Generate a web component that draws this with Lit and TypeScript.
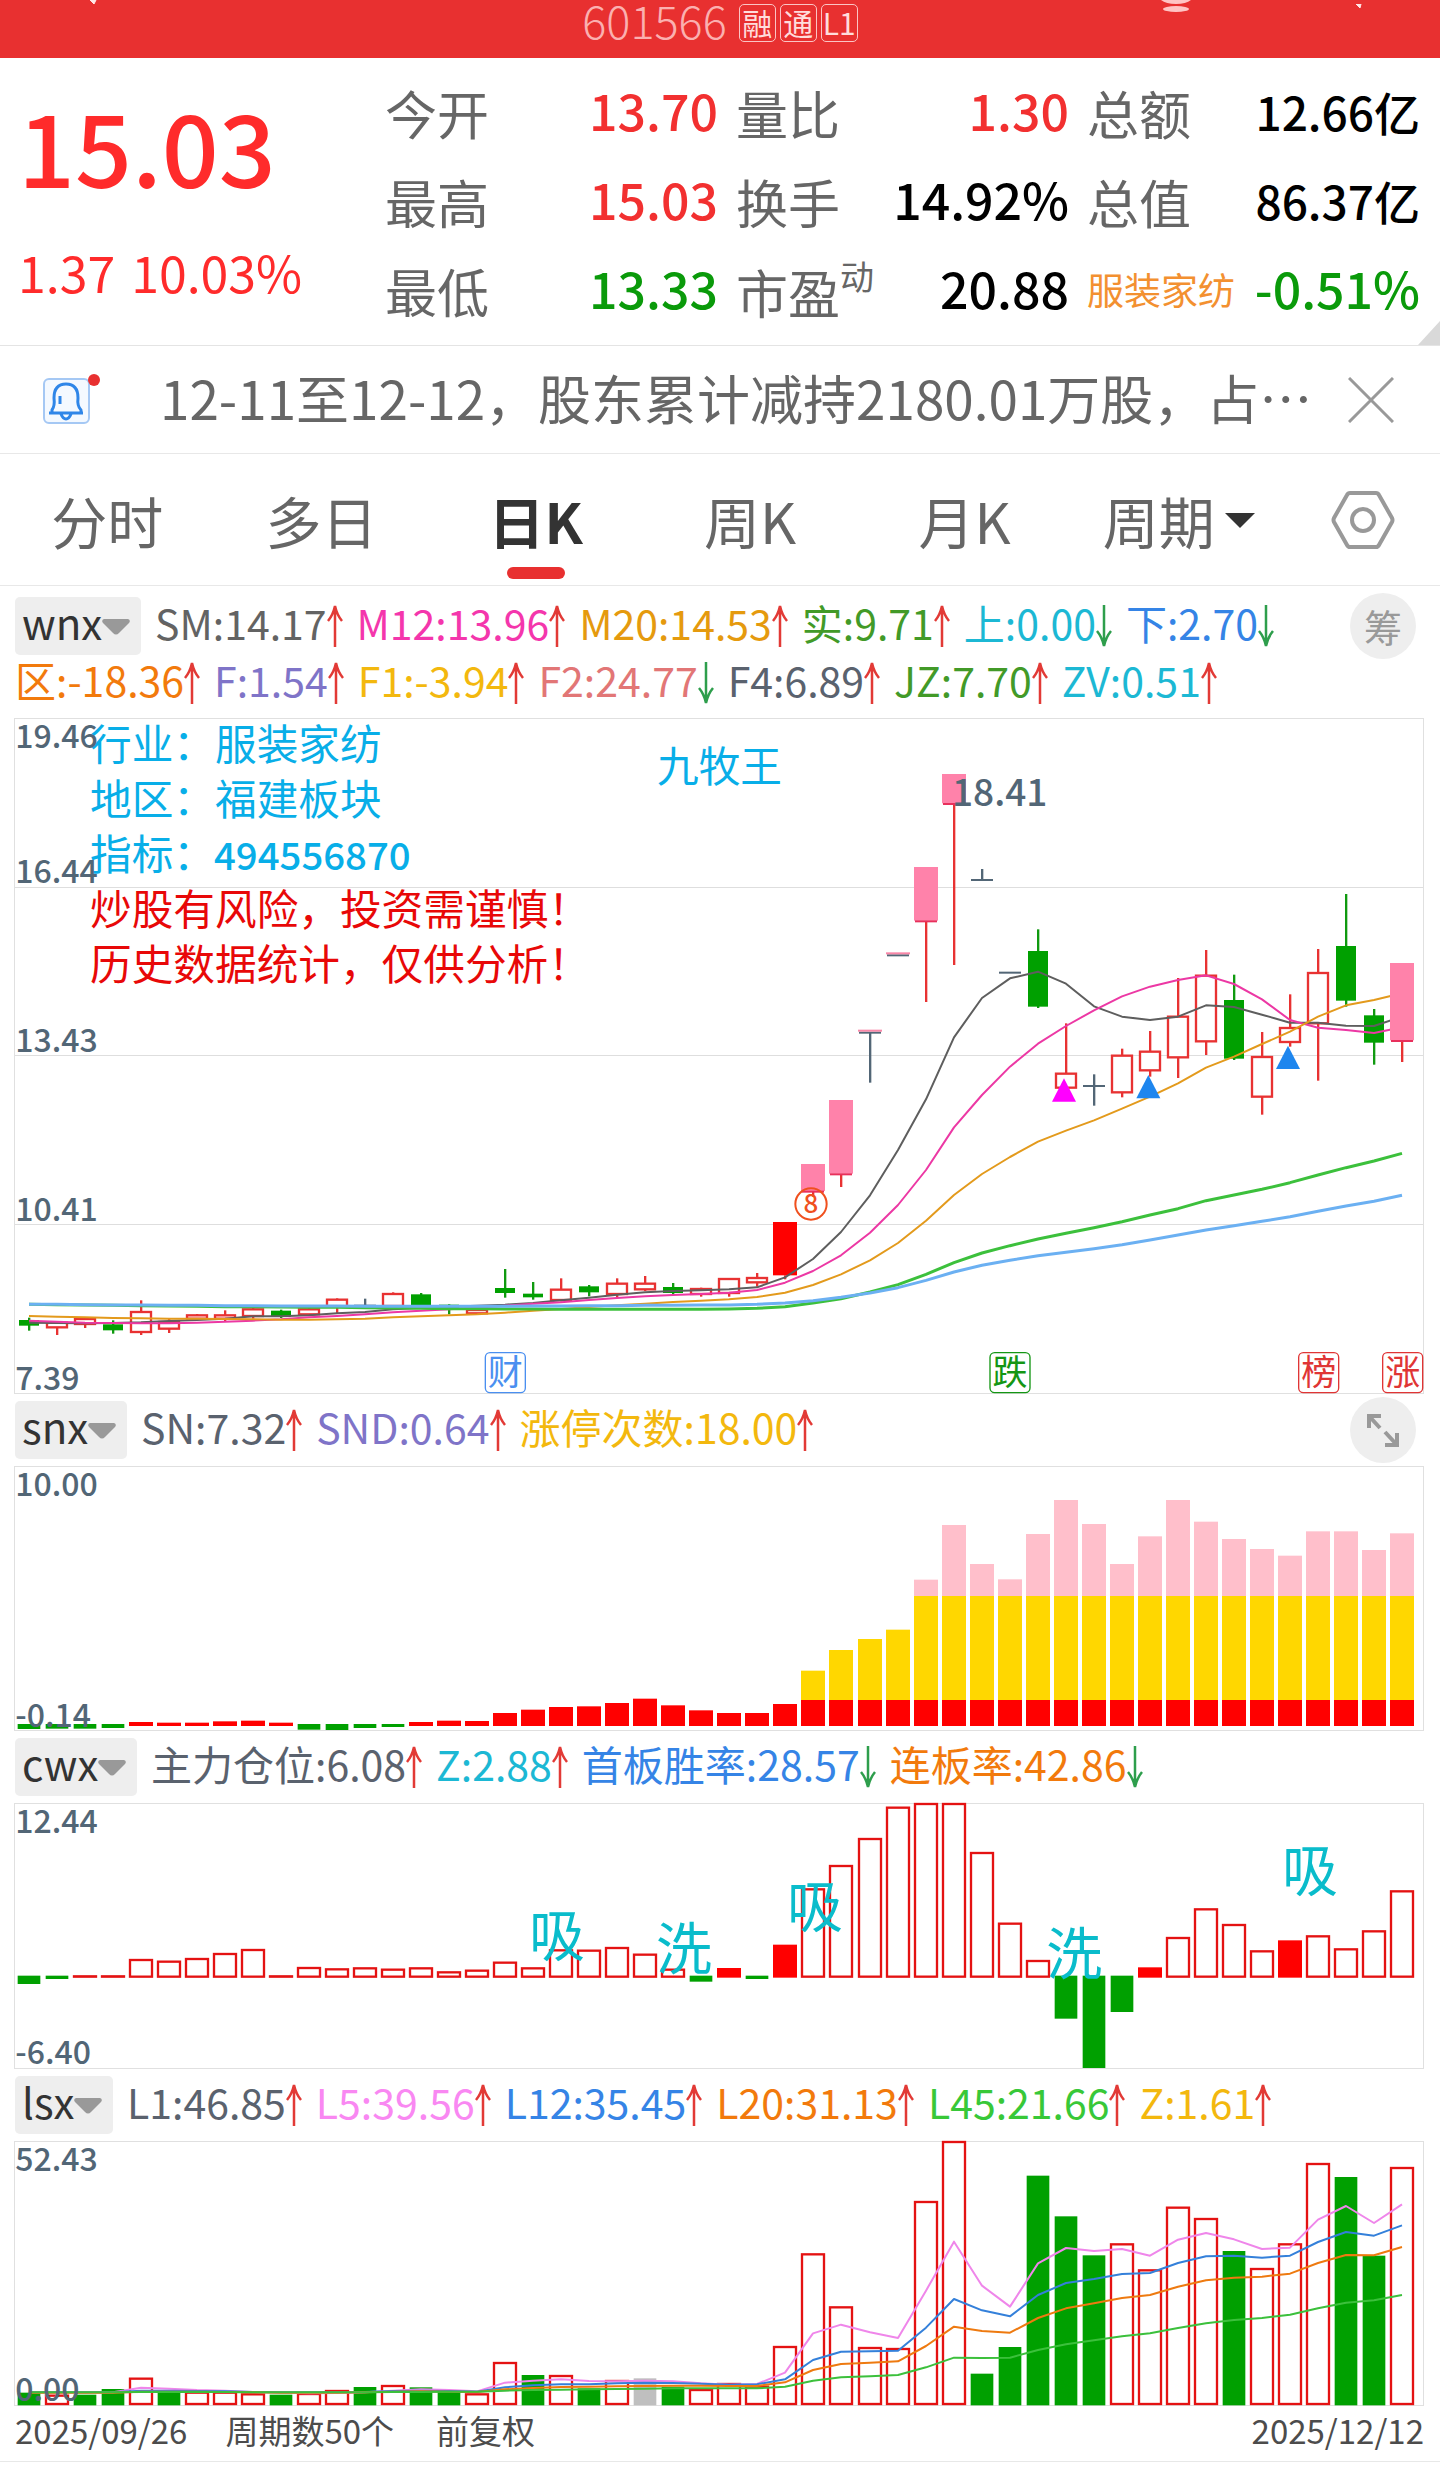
import { LitElement, html, svg, css, nothing } from "lit";
import { customElement, property } from "lit/decorators.js";

/* ---------- chart geometry: three drawing units per pixel ---------- */
const U = 3;
const PLOT_WIDTH = 1410;
const centre = (i: number) => U * Math.round(14.6 + 28.03 * i);
const shift = (base: number, values: number[]) => values.map((v) => v + base);

type Reading = { text: string; color: string; up: boolean };
const RED = "#e83232";
const GREEN = "#00a000";
const SLATE = "#526676";

const rows: Record<string, Reading[]> = {
  wnx1: [
    { text: "SM:14.17", color: "#636363", up: true },
    { text: "M12:13.96", color: "#f436ac", up: true },
    { text: "M20:14.53", color: "#e59a0e", up: true },
    { text: "实:9.71", color: "#429a28", up: true },
    { text: "上:0.00", color: "#1cb8d4", up: false },
    { text: "下:2.70", color: "#3584e6", up: false },
  ],
  wnx2: [
    { text: "区:-18.36", color: "#f27a0c", up: true },
    { text: "F:1.54", color: "#7f74c8", up: true },
    { text: "F1:-3.94", color: "#f3b80e", up: true },
    { text: "F2:24.77", color: "#e27676", up: false },
    { text: "F4:6.89", color: "#5a626e", up: true },
    { text: "JZ:7.70", color: "#429a28", up: true },
    { text: "ZV:0.51", color: "#1cb8d4", up: true },
  ],
  snx: [
    { text: "SN:7.32", color: "#5a626e", up: true },
    { text: "SND:0.64", color: "#7f74c8", up: true },
    { text: "涨停次数:18.00", color: "#f3b80e", up: true },
  ],
  cwx: [
    { text: "主力仓位:6.08", color: "#5a626e", up: true },
    { text: "Z:2.88", color: "#1cb8d4", up: true },
    { text: "首板胜率:28.57", color: "#3584e6", up: false },
    { text: "连板率:42.86", color: "#f27a0c", up: false },
  ],
  lsx: [
    { text: "L1:46.85", color: "#5a626e", up: true },
    { text: "L5:39.56", color: "#f988f2", up: true },
    { text: "L12:35.45", color: "#3584e6", up: true },
    { text: "L20:31.13", color: "#f27a0c", up: true },
    { text: "L45:21.66", color: "#38c838", up: true },
    { text: "Z:1.61", color: "#f3b80e", up: true },
  ],
};

/* kind, high, body top, body bottom, low */
type Candle = [string, number, number, number, number];
const early: Candle[] = [
  ["g", 833, 840, 857, 872], ["r", 845, 848, 862, 885], ["r", 833, 837, 852, 864],
  ["g", 841, 853, 871, 881], ["r", 781, 816, 876, 885], ["r", 836, 846, 866, 879],
  ["r", 822, 826, 836, 840], ["r", 811, 826, 836, 846], ["r", 803, 808, 828, 836],
  ["g", 809, 812, 831, 834], ["r", 803, 808, 823, 826], ["r", 775, 779, 800, 820],
  ["d", 776, 797, 797, 802], ["r", 757, 762, 798, 798], ["g", 759, 763, 798, 798],
  ["g", 793, 794, 810, 823], ["r", 795, 810, 820, 823], ["g", 687, 744, 759, 773],
  ["g", 726, 761, 772, 779], ["r", 715, 749, 780, 784], ["g", 735, 739, 757, 769],
  ["r", 715, 731, 762, 773], ["r", 708, 731, 748, 753], ["g", 729, 741, 759, 764],
  ["r", 743, 747, 762, 770], ["r", 717, 717, 759, 770], ["r", 699, 714, 727, 740],
];
const late: Candle[] = [
  ["f", 1506, 1506, 1666, 1678], ["p", 1332, 1332, 1415, 1430], ["p", 1140, 1140, 1363, 1401],
  ["t", 929, 938, 938, 1088], ["t", 697, 706, 706, 706], ["p", 441, 441, 604, 846],
  ["p", 162, 162, 252, 735], ["d", 447, 480, 480, 480], ["d", 758, 758, 758, 758],
  ["g", 628, 693, 860, 864], ["r", 910, 1061, 1103, 1103], ["d", 1063, 1098, 1098, 1157],
  ["r", 986, 1007, 1117, 1132], ["r", 933, 995, 1051, 1070], ["r", 774, 890, 1012, 1074],
  ["r", 690, 767, 964, 1005], ["g", 764, 840, 1016, 1020], ["r", 936, 1011, 1130, 1184],
  ["r", 823, 924, 966, 980], ["r", 687, 759, 910, 1082], ["g", 522, 678, 842, 860],
  ["g", 867, 886, 968, 1034], ["p", 729, 729, 963, 1026],
];
const candles: Candle[] = [
  ...early.map(([k, ...v]) => [k, ...shift(960, v)] as Candle),
  ...late,
];

const averages: { color: string; width: number; y: number[] }[] = [
  {
    color: "#5e5e5e", width: 6,
    y: [
      ...shift(960, [848, 849, 850, 849, 847, 843, 840, 836, 829, 829, 826, 820, 816, 808, 804, 800, 797, 794, 789, 781, 773, 764, 757, 753, 751]),
      ...shift(1080, [628, 622, 592, 537, 456, 346, 210, 58]),
      952, 834, 775, 755, 791, 859, 890, 900, 890, 856, 861, 884, 908, 908, 917, 918, 890,
    ],
  },
  {
    color: "#ec38a4", width: 6,
    y: [
      ...shift(960, [842, 845, 848, 849, 850, 850, 848, 845, 842, 838, 832, 828, 823, 817, 812, 808, 803, 797, 791, 787, 780, 774, 769, 765, 762]),
      ...shift(1080, [638, 630, 608, 573, 526, 458, 375, 270, 142, 45]),
      1040, 971, 918, 871, 829, 800, 780, 766, 792, 838, 900, 923, 930, 939, 922,
    ],
  },
  {
    color: "#e39a1c", width: 6,
    y: [
      ...shift(960, [828, 830, 832, 834, 835, 836, 836, 837, 838, 839, 839, 838, 836, 832, 829, 826, 823, 818, 812, 807, 801, 796, 791, 786, 782]),
      ...shift(1080, [658, 651, 638, 615, 583, 541, 489, 422, 345, 282, 231, 185, 152, 121, 86]),
      1130, 1090, 1043, 1010, 972, 935, 890, 856, 840, 820,
    ],
  },
  {
    color: "#3cc03c", width: 9,
    y: [
      ...shift(960, [793, 794, 795, 796, 797, 798, 799, 800, 800, 801, 802, 802, 803, 804, 805, 806, 806, 807, 807, 808, 808, 808, 808, 808, 808]),
      ...shift(1080, [687, 685, 680, 669, 656, 636, 614, 583, 548, 519, 497, 477, 460, 443, 425, 405, 386, 362, 345, 328, 308, 285, 263, 243, 220]),
    ],
  },
  {
    color: "#6bb0f2", width: 9,
    y: [
      ...shift(960, [793, 793, 794, 795, 795, 796, 796, 797, 797, 798, 798, 798, 799, 799, 799, 799, 799, 799, 798, 798, 797, 797, 796, 796, 795]),
      ...shift(1080, [675, 673, 669, 662, 652, 639, 623, 601, 576, 556, 541, 527, 517, 506, 494, 480, 465, 450, 437, 424, 410, 394, 378, 364, 346]),
    ],
  },
];

const polyline = (y: number[], color: string, width: number) => svg`
  <polyline points=${y.map((v, i) => `${centre(i)},${v}`).join(" ")}
    fill="none" stroke=${color} stroke-width=${width} stroke-linejoin="round" />`;

const box = (i: number, top: number, bottom: number, fill: string, half = 36) => svg`
  <rect x=${centre(i) - half} y=${top} width=${half * 2} height=${Math.max(bottom - top, 3)} fill=${fill} />`;

const hollow = (i: number, top: number, bottom: number, color: string, half: number) => svg`
  <rect x=${centre(i) - half + 3} y=${top} width=${half * 2 - 6} height=${Math.max(bottom - top, 1)}
    fill="#fff" stroke=${color} stroke-width="7" />`;

const wick = (i: number, top: number, bottom: number, color: string) =>
  bottom > top
    ? svg`<rect x=${centre(i) - 3} y=${top} width="7" height=${bottom - top} fill=${color} />`
    : nothing;

const axis = (text: string, y: number) => svg`
  <text x="4" y=${y} font-size="96" font-weight="500" fill=${SLATE}>${text}</text>`;

const frame = (top: number, height: number) => svg`
  <rect x="1.5" y=${top + 1.5} width=${PLOT_WIDTH * U - 3} height=${height * U - 3}
    fill="none" stroke="#e0e0e0" stroke-width="3" />`;

const drawCandle = ([kind, high, top, bottom, low]: Candle, i: number) => {
  switch (kind) {
    case "g":
      return svg`${wick(i, high, low, "#109a10")}${box(i, top, bottom, GREEN, 30)}`;
    case "r":
      return svg`${wick(i, high, top, RED)}${wick(i, bottom, low, RED)}${hollow(i, top, bottom, RED, 33)}`;
    case "f":
      return svg`${wick(i, bottom, low, RED)}${box(i, top, bottom, "#f00")}`;
    case "d":
      return svg`${wick(i, high, low, SLATE)}${box(i, top - 3, top + 3, SLATE, 33)}`;
    case "t":
      return svg`${wick(i, top, low, SLATE)}${box(i, top - 3, top + 3, SLATE, 33)}`;
    default:
      return svg`${wick(i, bottom, low, RED)}`;
  }
};

const drawLimitUp = ([kind, high, top, bottom]: Candle, i: number) => {
  if (kind === "p") {
    return svg`${box(i, top, bottom - 2, "#ff82aa")}${box(i, bottom - 3, bottom + 3, "#e8305c", 33)}`;
  }
  return kind === "t" ? box(i, high, top - 3, "#f987a8", 36) : nothing;
};

const marker = (x: number, top: number, color: string) => svg`
  <polygon points=${`${x},${top} ${x + 36},${top + 70} ${x - 36},${top + 70}`} fill=${color} />`;

const tag = (x: number, label: string, color: string) => svg`
  <rect x=${x} y="1898" width="120" height="120" rx="14" fill="#fff" stroke=${color} stroke-width="4" />
  <text x=${x + 60} y="1996" font-size="105" text-anchor="middle" fill=${color}>${label}</text>`;

const notes = [
  ["行业：服装家纺", "#08aee8"],
  ["地区：福建板块", "#08aee8"],
  ["指标：", "#08aee8"],
  ["炒股有风险，投资需谨慎！", "#e80808"],
  ["历史数据统计，仅供分析！", "#e80808"],
];

const priceChart = () => svg`
  ${frame(-6, 676)}
  ${[501, 1005, 1512].map((y) => svg`<rect x="3" y=${y} width="4224" height="3" fill="#dedede" />`)}
  ${notes.map(([text, color], n) => svg`
    <text x="228" y=${120 + n * 165} font-size="125" fill=${color}>${text}</text>`)}
  <text x="600" y="450" font-size="115" font-weight="500" fill="#08aee8">494556870</text>
  <text x="1929" y="186" font-size="125" fill="#08aee8">九牧王</text>
  ${candles.map(drawCandle)}
  ${averages.map((a) => polyline(a.y, a.color, a.width))}
  ${candles.map(drawLimitUp)}
  ${marker(3150, 1075, "#ff00ff")}
  ${marker(3403, 1065, "#1e86ee")}
  ${marker(3822, 977, "#1e86ee")}
  <text x="2814" y="258" font-size="111" font-weight="500" fill=${SLATE}>18.41</text>
  <circle cx="2391" cy="1452" r="47" fill="none" stroke="#f0501e" stroke-width="6" />
  <text x="2391" y="1480" font-size="78" font-weight="500" text-anchor="middle" fill="#f0501e">8</text>
  ${tag(1414, "财", "#4a8ff0")}
  ${tag(2928, "跌", "#149614")}
  ${tag(3854, "榜", "#e03535")}
  ${tag(4106, "涨", "#e03535")}
  ${axis("19.46", 84)}${axis("16.44", 489)}${axis("13.43", 996)}${axis("10.41", 1503)}${axis("7.39", 2010)}`;

const strength = [
  1017, 1016, 1016, 1014, 996, 998, 998, 994, 992, 998, 1019, 1020, 1014, 1011, 996, 992, 993,
  969, 959, 951, 949, 939, 926, 946, 961, 969, 969, 942, 842, 780, 747, 719, 569, 405, 522, 568,
  432, 330, 402, 522, 439, 330, 395, 447, 477, 497, 424, 424, 480, 430,
];

const strengthChart = () => svg`
  ${frame(228, 265)}
  ${strength.map((v, i) => {
    if (v > 1008) return box(i, 1002, v, GREEN, 34);
    return svg`
      ${v < 618 ? box(i, v, 618, "#ffbfcb") : nothing}
      ${v < 930 && i > 27 ? box(i, Math.max(v, 618), 930, "#ffd700") : nothing}
      ${box(i, i > 27 ? 930 : v, 1008, "#f00")}`;
  })}
  ${axis("10.00", 318)}${axis("-0.14", 1010)}`;

/* kind (g: below zero, f: solid, r: hollow) and bar end */
const holding: [string, number][] = [
  ["g", 762], ["g", 747], ["r", 739], ["r", 739], ["r", 690], ["r", 695], ["r", 687], ["r", 672],
  ["r", 660], ["r", 739], ["r", 714], ["r", 718], ["r", 715], ["r", 719], ["r", 715], ["r", 727],
  ["r", 722], ["r", 698], ["r", 715], ["r", 661], ["r", 662], ["r", 654], ["r", 674], ["r", 719],
  ["g", 755], ["f", 714], ["g", 747], ["f", 644], ["r", 478], ["r", 408], ["r", 327], ["r", 233],
  ["r", 222], ["r", 222], ["r", 369], ["r", 581], ["r", 693], ["g", 866], ["g", 1014], ["g", 846],
  ["f", 712], ["r", 624], ["r", 538], ["r", 585], ["r", 664], ["f", 631], ["r", 619], ["r", 658],
  ["r", 604], ["r", 484],
];

const signals: [string, number, number][] = [
  ["吸", 1629, 677], ["洗", 2010, 718], ["吸", 2403, 590], ["洗", 3181, 731], ["吸", 3888, 482],
];

const holdingChart = () => svg`
  ${frame(219, 266)}
  ${holding.map(([kind, v], i) =>
    kind === "g" ? box(i, 737, v, GREEN, 34)
      : kind === "f" ? box(i, v, 743, "#f00")
        : hollow(i, v, 740, "#e41212", 36))}
  ${signals.map(([text, x, y]) => svg`
    <text x=${x} y=${y} font-size="168" text-anchor="middle" fill="#0abccb">${text}</text>`)}
  ${axis("12.44", 308)}${axis("-6.40", 1003)}`;

const volume: [string, number][] = [
  ["g", 938], ["r", 947], ["g", 944], ["g", 927], ["r", 896], ["g", 935], ["r", 938], ["r", 938],
  ["r", 943], ["g", 944], ["r", 942], ["r", 933], ["g", 921], ["r", 918], ["g", 922], ["g", 936],
  ["r", 943], ["r", 849], ["g", 885], ["r", 888], ["g", 925], ["r", 903], ["n", 895], ["g", 920],
  ["r", 930], ["r", 912], ["r", 920], ["r", 801], ["r", 523], ["r", 682], ["r", 804], ["r", 807],
  ["r", 366], ["r", 184], ["g", 881], ["g", 801], ["g", 287], ["g", 409], ["g", 526], ["r", 493],
  ["r", 571], ["r", 383], ["r", 417], ["g", 513], ["r", 567], ["r", 493], ["r", 252], ["g", 291],
  ["g", 527], ["r", 264],
];

const volumeLines: [string, number[]][] = [
  ["#ef86ea", [937, 937, 938, 937, 923, 926, 930, 932, 936, 938, 940, 939, 937, 932, 928, 930, 934, 908, 902, 898, 903, 904, 902, 904, 910, 914, 912, 878, 760, 734, 757, 774, 632, 485, 617, 680, 550, 504, 513, 507, 527, 479, 459, 478, 507, 503, 419, 378, 429, 373]],
  ["#3480da", [937, 937, 937, 937, 932, 932, 933, 934, 936, 937, 937, 937, 936, 933, 932, 933, 935, 922, 916, 913, 913, 910, 908, 909, 911, 914, 913, 898, 840, 815, 814, 812, 743, 657, 691, 709, 645, 609, 597, 582, 579, 549, 529, 527, 533, 527, 486, 456, 467, 436]],
  ["#ee7a10", [938, 938, 938, 938, 935, 935, 935, 936, 937, 938, 938, 938, 937, 935, 934, 935, 936, 928, 924, 921, 920, 919, 918, 917, 917, 918, 918, 907, 870, 852, 848, 844, 798, 740, 753, 758, 714, 685, 670, 654, 645, 620, 601, 593, 590, 581, 549, 525, 526, 501]],
  ["#3cc03c", [937, 937, 937, 937, 936, 936, 936, 936, 937, 937, 937, 937, 937, 936, 936, 935, 935, 932, 930, 929, 928, 927, 926, 925, 925, 925, 925, 920, 902, 892, 889, 885, 862, 833, 834, 833, 810, 793, 781, 769, 760, 744, 730, 720, 714, 704, 685, 668, 661, 645]],
];

const volumeChart = () => svg`
  ${frame(183, 265)}
  ${volume.map(([kind, v], i) =>
    kind === "g" ? box(i, v, 976, GREEN, 34)
      : kind === "n" ? box(i, v, 976, "#bfbfbf", 34)
        : hollow(i, Math.max(v, 186), 972, "#e41212", 36))}
  ${volumeLines.map(([color, y]) => polyline(y, color, 6))}
  ${axis("52.43", 272)}${axis("0.00", 964)}`;

/* ---------- indicator header ---------- */
@customElement("indicator-head")
export class IndicatorHead extends LitElement {
  @property() name = "";
  @property({ attribute: false }) lines: Reading[][] = [];

  static styles = css`
    :host { display: block; flex: 1; min-width: 0; }
    .head { display: flex; align-items: center; gap: 14px; height: 72px; }
    .picker { position: relative; flex: none; }
    select {
      display: block; appearance: none; border: 0; border-radius: 5px; background: #eee; color: #333;
      height: 58px; padding: 0 38px 8px 7px; margin: 0;
      font: 400 42px/50px "Noto Sans CJK SC", sans-serif;
    }
    .caret { position: absolute; right: 11px; top: 22px; pointer-events: none; display: block; }
    .line { display: flex; align-items: center; gap: 14px; }
    .more { height: 42px; }
    .reading { display: flex; align-items: center; white-space: nowrap; font-size: 41px; line-height: 50px; }
    .label { display: block; margin-top: -8px; }
    .arrow { display: block; flex: none; }
  `;

  private line(items: Reading[], cls: string) {
    return html`<div class="line ${cls}">
      ${items.map((r) => html`<span class="reading" style="color:${r.color}">
        <span class="label">${r.text}</span>
        <svg class="arrow" width="16" height="42" viewBox="0 0 16 42" aria-hidden="true">
          ${r.up
            ? svg`<path d="M8 42V1M1 16Q6 10 8 1Q10 10 15 16" fill="none" stroke="#e23a36" stroke-width="2.5" />`
            : svg`<path d="M8 0V41M1 26Q6 32 8 41Q10 32 15 26" fill="none" stroke="#2e9e4c" stroke-width="2.5" />`}
        </svg></span>`)}
    </div>`;
  }

  render() {
    return html`
      <div class="head">
        <label class="picker">
          <select aria-label="指标"><option>${this.name}</option></select>
          <svg class="caret" width="28" height="16" viewBox="0 0 28 16" aria-hidden="true">
            <path d="M2 0H26Q29 1 27 4L17 14Q14 17 11 14L1 4Q-1 1 2 0Z" fill="#999" />
          </svg>
        </label>
        ${this.line(this.lines[0] ?? [], "")}
      </div>
      ${this.lines[1] ? this.line(this.lines[1], "more") : nothing}`;
  }
}

/* ---------- page ---------- */
@customElement("app-root")
export class AppRoot extends LitElement {
  static styles = css`
    :host {
      display: block; background: #fff; color: #666;
      font-family: "Noto Sans CJK SC", "Noto Sans", sans-serif;
    }
    button { border: 0; background: none; padding: 0; margin: 0; font: inherit; color: inherit; cursor: pointer; }
    svg { display: block; }
    .top {
      display: grid; grid-template-columns: 1fr auto 1fr; height: 58px; background: #e83030; color: #fff;
    }
    .back { padding-left: 88px; justify-self: start; align-self: start; }
    .tools { display: flex; gap: 162px; padding-right: 74px; justify-self: end; align-self: start; }
    .title { display: flex; align-items: center; gap: 4px; height: 46px; }
    .code { font-size: 45px; font-weight: 300; line-height: 46px; margin: 0 8px 6px 0; color: #fbb0b0; }
    .badge {
      box-sizing: border-box; width: 37px; height: 38px; border: 1px solid #fbc4c4; border-radius: 5px;
      font-size: 30px; line-height: 34px; text-align: center; color: #ffdcdc;
    }
    .quote {
      position: relative; box-sizing: border-box; height: 288px; border-bottom: 1px solid #e4e4e4;
      display: grid; grid-template-columns: 367px repeat(3, 1fr); column-gap: 18px; padding: 11px 20px 0 0;
    }
    .price { padding-left: 18px; color: #ff2b2b; font-weight: 500; white-space: nowrap; }
    .last { font-size: 100px; line-height: 152px; }
    .change { display: flex; gap: 16px; font-size: 50px; line-height: 80px; font-weight: 400; margin-top: 10px; }
    .stats { display: flex; flex-direction: column; }
    .stat { display: flex; justify-content: space-between; align-items: center; height: 89px; white-space: nowrap; }
    .name { font-size: 52px; line-height: 60px; padding-bottom: 2px; }
    .name sup { display: inline-block; font-size: 34px; line-height: 34px; height: 34px; vertical-align: 24px; }
    .sector { font-size: 37px; line-height: 60px; color: #f39030; padding-bottom: 6px; }
    .value { font-size: 50px; line-height: 60px; font-weight: 500; color: #000; padding-bottom: 10px; }
    .wide { font-size: 46px; padding-bottom: 6px; }
    .up { color: #f23030; }
    .down { color: #0a9a0a; }
    .fold { position: absolute; right: 0; bottom: 0; }
    .alert {
      box-sizing: border-box; height: 108px; border-bottom: 1px solid #e8e8e8;
      display: flex; align-items: center; padding: 0 46px 0 43px;
    }
    .bell { flex: none; width: 58px; }
    .news {
      flex: 1; min-width: 0; margin: 0 20px 0 59px; font-size: 53px; line-height: 80px; padding-bottom: 6px;
      color: #666; text-decoration: none; white-space: nowrap;
    }
    .close { flex: none; }
    .tabs {
      box-sizing: border-box; height: 132px; border-bottom: 1px solid #e8e8e8; display: flex; align-items: stretch;
    }
    .tab {
      flex: 1; display: flex; flex-direction: column; align-items: center; justify-content: flex-end;
      font-size: 56px; line-height: 76px; padding-bottom: 27px; white-space: nowrap;
    }
    .chosen { color: #333; font-weight: 700; padding-bottom: 6px; }
    .bar { width: 58px; height: 12px; border-radius: 6px; background: #e83030; margin-top: 9px; }
    .period { display: flex; align-items: center; gap: 10px; }
    .settings { flex: none; width: 154px; display: flex; align-items: center; justify-content: center; }
    .indicator { display: flex; align-items: flex-start; padding: 0 24px 0 15px; height: 72px; }
    .double { height: 128px; padding-top: 4px; }
    .round {
      flex: none; width: 66px; height: 66px; margin-top: 3px; border-radius: 50%; background: #eee; color: #999;
      display: flex; align-items: center; justify-content: center; font-size: 38px; line-height: 56px;
    }
    .plot { width: auto; margin: 0 16px 0 14px; }
    .plot svg { width: 100%; height: auto; overflow: visible; font-family: "Noto Sans CJK SC", sans-serif; }
    .foot {
      display: flex; gap: 38px; height: 55px; padding: 0 16px 0 15px; border-bottom: 1px solid #e8e8e8;
      font-size: 33px; line-height: 48px; color: #4c4c4c; white-space: nowrap;
    }
    .adjust { margin-left: 4px; }
    .end { margin-left: auto; }
  `;

  private stat(name: unknown, value: string, tone = "", nameClass = "name") {
    return html`<div class="stat"><span class=${nameClass}>${name}</span><span class="value ${tone}">${value}</span></div>`;
  }

  private plot(label: string, top: number, height: number, content: unknown) {
    return html`<div class="plot">
      <svg viewBox="0 ${top} ${PLOT_WIDTH * U} ${height * U}" role="img" aria-label=${label}>${content}</svg>
    </div>`;
  }

  render() {
    return html`
      <header class="top">
        <button class="back" aria-label="返回">
          <svg width="14" height="6" viewBox="0 0 14 6"><path d="M2 0L6 4L8 0Z" fill="#ffe6e6" stroke="#ffe6e6" /></svg>
        </button>
        <div class="title">
          <span class="code">601566</span>
          <span class="badge">融</span><span class="badge">通</span><span class="badge">L1</span>
        </div>
        <div class="tools">
          <button aria-label="助手">
            <svg width="32" height="14" viewBox="0 0 32 14">
              <path d="M1 0H31Q26 4 16 4Q6 4 1 0Z" fill="#ffc4c4" /><ellipse cx="16" cy="9" rx="13" ry="3" fill="#ffc4c4" />
            </svg>
          </button>
          <button aria-label="搜索">
            <svg width="12" height="6" viewBox="0 0 12 6"><path d="M2 0L6 4L7 0Z" fill="#ffe6e6" stroke="#ffe6e6" /></svg>
          </button>
        </div>
      </header>

      <section class="quote">
        <div class="price">
          <div class="last">15.03</div>
          <div class="change"><span>1.37</span><span>10.03%</span></div>
        </div>
        <div class="stats">
          ${this.stat("今开", "13.70", "up")}${this.stat("最高", "15.03", "up")}${this.stat("最低", "13.33", "down")}
        </div>
        <div class="stats">
          ${this.stat("量比", "1.30", "up")}${this.stat("换手", "14.92%")}
          ${this.stat(html`市盈<sup>动</sup>`, "20.88")}
        </div>
        <div class="stats">
          ${this.stat("总额", "12.66亿", "wide")}${this.stat("总值", "86.37亿", "wide")}
          ${this.stat("服装家纺", "-0.51%", "down", "sector")}
        </div>
        <svg class="fold" width="22" height="24" viewBox="0 0 22 24" aria-hidden="true"><path d="M22 0V24H0Z" fill="#d9d9d9" /></svg>
      </section>

      <section class="alert">
        <svg class="bell" width="58" height="54" viewBox="0 0 58 54" aria-hidden="true">
          <rect x="1" y="6" width="45" height="44" rx="5" fill="#f4f9ff" stroke="#a5c8f4" stroke-width="2" />
          <path d="M6 40H40M9 40V37Q12 33 11 25Q11 11 23 11Q35 11 35 25Q34 33 38 37V40M18 41Q20 46 23 46Q26 46 28 41M17 23V31"
            fill="none" stroke="#2f86e8" stroke-width="3" stroke-linejoin="round" />
          <circle cx="51" cy="7" r="6" fill="#e83030" />
        </svg>
        <a class="news" href="#news">12-11至12-12，股东累计减持2180.01万股，占…</a>
        <button class="close" aria-label="关闭">
          <svg width="46" height="46" viewBox="0 0 46 46"><path d="M1 1L45 45M45 1L1 45" stroke="#999" stroke-width="3" /></svg>
        </button>
      </section>

      <nav class="tabs">
        <button class="tab">分时</button>
        <button class="tab">多日</button>
        <button class="tab chosen">日K<span class="bar"></span></button>
        <button class="tab">周K</button>
        <button class="tab">月K</button>
        <button class="tab">
          <span class="period">周期<svg width="30" height="15" viewBox="0 0 30 15"><path d="M0 0H30L15 15Z" fill="#333" /></svg></span>
        </button>
        <button class="settings" aria-label="设置">
          <svg width="64" height="58" viewBox="0 0 64 58" fill="none" stroke="#999" stroke-width="4">
            <path d="M19 2H45Q47 2 48 4L61 27Q62 29 61 31L48 54Q47 56 45 56H19Q17 56 16 54L3 31Q2 29 3 27L16 4Q17 2 19 2Z" />
            <circle cx="32" cy="29" r="11" />
          </svg>
        </button>
      </nav>

      <div class="indicator double">
        <indicator-head name="wnx" .lines=${[rows.wnx1, rows.wnx2]}></indicator-head>
        <button class="round">筹</button>
      </div>
      ${this.plot("日K", -6, 676, priceChart())}

      <div class="indicator">
        <indicator-head name="snx" .lines=${[rows.snx]}></indicator-head>
        <button class="round" aria-label="展开">
          <svg width="34" height="34" viewBox="0 0 34 34" fill="none" stroke="#999" stroke-width="4">
            <path d="M3 15V3H15M3 3L14 15M19 19L31 32M31 20V32H19" />
          </svg>
        </button>
      </div>
      ${this.plot("snx", 228, 265, strengthChart())}

      <div class="indicator"><indicator-head name="cwx" .lines=${[rows.cwx]}></indicator-head></div>
      ${this.plot("cwx", 219, 266, holdingChart())}

      <div class="indicator"><indicator-head name="lsx" .lines=${[rows.lsx]}></indicator-head></div>
      ${this.plot("lsx", 183, 265, volumeChart())}

      <footer class="foot">
        <span>2025/09/26</span><span>周期数50个</span><span class="adjust">前复权</span><span class="end">2025/12/12</span>
      </footer>`;
  }
}
